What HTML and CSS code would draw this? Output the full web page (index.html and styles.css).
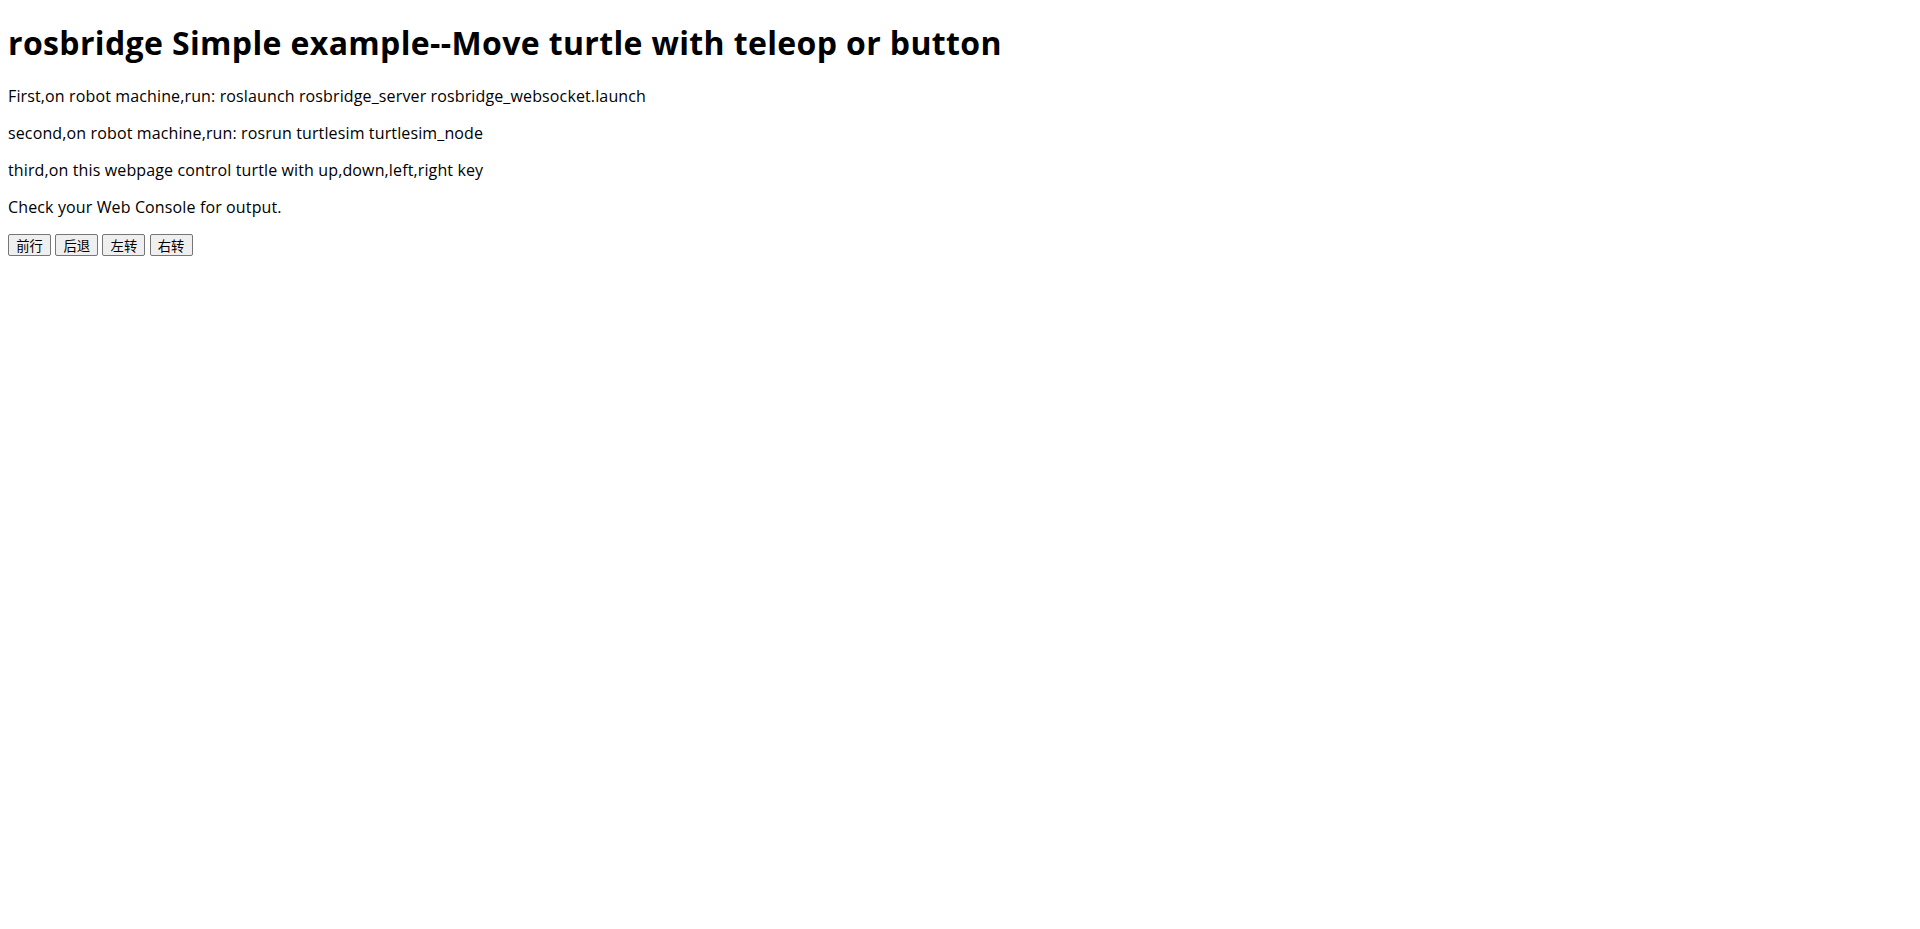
FILE: index.html
```html
<!DOCTYPE html>
<html lang="zh-CN">
<head>
<meta charset="utf-8">
<title>rosbridge Simple example</title>
<link rel="stylesheet" href="styles.css">
</head>
<body class="page">
<h1 class="title">rosbridge Simple example--Move turtle with teleop or button</h1>
<p class="line">First,on robot machine,run: roslaunch rosbridge_server rosbridge_websocket.launch</p>
<p class="line">second,on robot machine,run: rosrun turtlesim turtlesim_node</p>
<p class="line">third,on this webpage control turtle with up,down,left,right key</p>
<p class="line">Check your Web Console for output.</p>
<div class="controls">
<button class="btn" type="button">前行</button>
<button class="btn" type="button">后退</button>
<button class="btn" type="button">左转</button>
<button class="btn" type="button">右转</button>
</div>
</body>
</html>
```
FILE: styles.css
```css
.page {
  margin: 8px;
  font-family: "Open Sans", "Noto Sans CJK SC", sans-serif;
  color: #000;
  background: #fff;
}
.title {
  font-size: 32px;
  font-weight: bold;
  line-height: 42px;
  letter-spacing: 0.36px;
  margin: 14px 0 22px;
}
.line {
  font-size: 16px;
  line-height: 21px;
  letter-spacing: 0.13px;
  margin: 16px 0;
}
.controls {
  font-size: 16px;
  line-height: 21px;
}
.btn {
  font-family: "Noto Sans CJK SC", sans-serif;
  font-size: 13.333px;
  line-height: 17px;
  padding: 1px 7.2px;
  border: 1px solid #767676;
  border-radius: 2px;
  background: #efefef;
  color: #000;
  margin: 0;
  height: 22px;
}
```
